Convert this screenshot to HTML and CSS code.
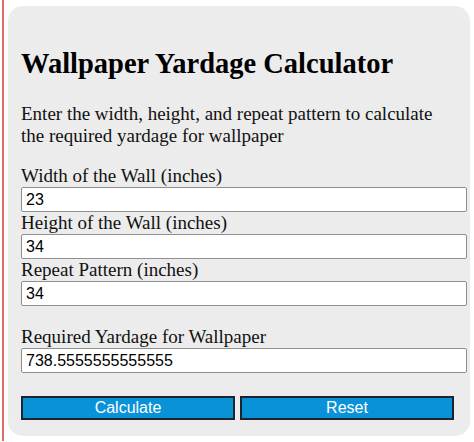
FILE: index.html
```html
<!DOCTYPE html>
<html lang="en">
<head>
    <meta charset="UTF-8">
    <meta name="viewport" content="width=device-width, initial-scale=1.0">
    <title>Wallpaper Yardage Calculator</title>
    <link rel="stylesheet" href="styles.css">
</head>
<body>
    <div class="page">
        <div class="calculator">
            <h2>Wallpaper Yardage Calculator</h2>
            <p>Enter the width, height, and repeat pattern to calculate the required yardage for wallpaper</p>

            <label for="width">Width of the Wall (inches)</label>
            <input type="text" id="width" value="23">

            <label for="height">Height of the Wall (inches)</label>
            <input type="text" id="height" value="34">

            <label for="repeat">Repeat Pattern (inches)</label>
            <input type="text" id="repeat" value="34">

            <label for="result" class="result-label">Required Yardage for Wallpaper</label>
            <input type="text" id="result" value="738.5555555555555" readonly>

            <div class="buttons">
                <button onclick="calculate()">Calculate</button>
                <button onclick="resetForm()">Reset</button>
            </div>
        </div>
    </div>

    <script>
        function calculate() {
            const w = parseFloat(document.getElementById('width').value);
            const h = parseFloat(document.getElementById('height').value);
            const r = parseFloat(document.getElementById('repeat').value);
            if (w && h && r) {
                document.getElementById('result').value = (w * (h + r)) / 36 * 18.97 / 11.91;
            }
        }

        function resetForm() {
            ['width', 'height', 'repeat', 'result'].forEach(function (id) {
                document.getElementById(id).value = '';
            });
        }
    </script>
</body>
</html>
```

FILE: styles.css
```css
body {
    margin: 0;
    padding-left: 2px;
    background-color: #fff;
    font-family: "Liberation Serif", "Times New Roman", serif;
    color: #111;
}
.page {
    border-left: 2px solid #e06a64;
    padding: 6px 4px 5px 4px;
}
.calculator {
    width: 436px;
    background-color: #ececec;
    border-radius: 15px;
    padding: 20px 13px 16px;
}
h2 {
    font-size: 28.5px;
    line-height: 32px;
    margin: 22px 0 23px;
    color: #000;
}
p {
    font-size: 19px;
    line-height: 22px;
    margin: 0 0 18px;
}
label {
    display: block;
    font-size: 19px;
    line-height: 22px;
}
.result-label {
    margin-top: 20px;
}
input {
    display: block;
    height: 25px;
    box-sizing: border-box;
    width: 446px;
    padding: 2px 4px;
    border: 1px solid #8f8f8f;
    border-radius: 2px;
    background-color: #fff;
    font-family: "Liberation Sans", Arial, sans-serif;
    font-size: 16px;
    color: #000;
}
.buttons {
    display: flex;
    gap: 5px;
    margin-top: 23px;
}
button {
    width: 214px;
    height: 24px;
    padding: 0;
    background-color: #0a92d8;
    color: #fff;
    border: 2px solid #1c2330;
    font-family: "Liberation Sans", Arial, sans-serif;
    font-size: 16px;
    cursor: pointer;
}
```
